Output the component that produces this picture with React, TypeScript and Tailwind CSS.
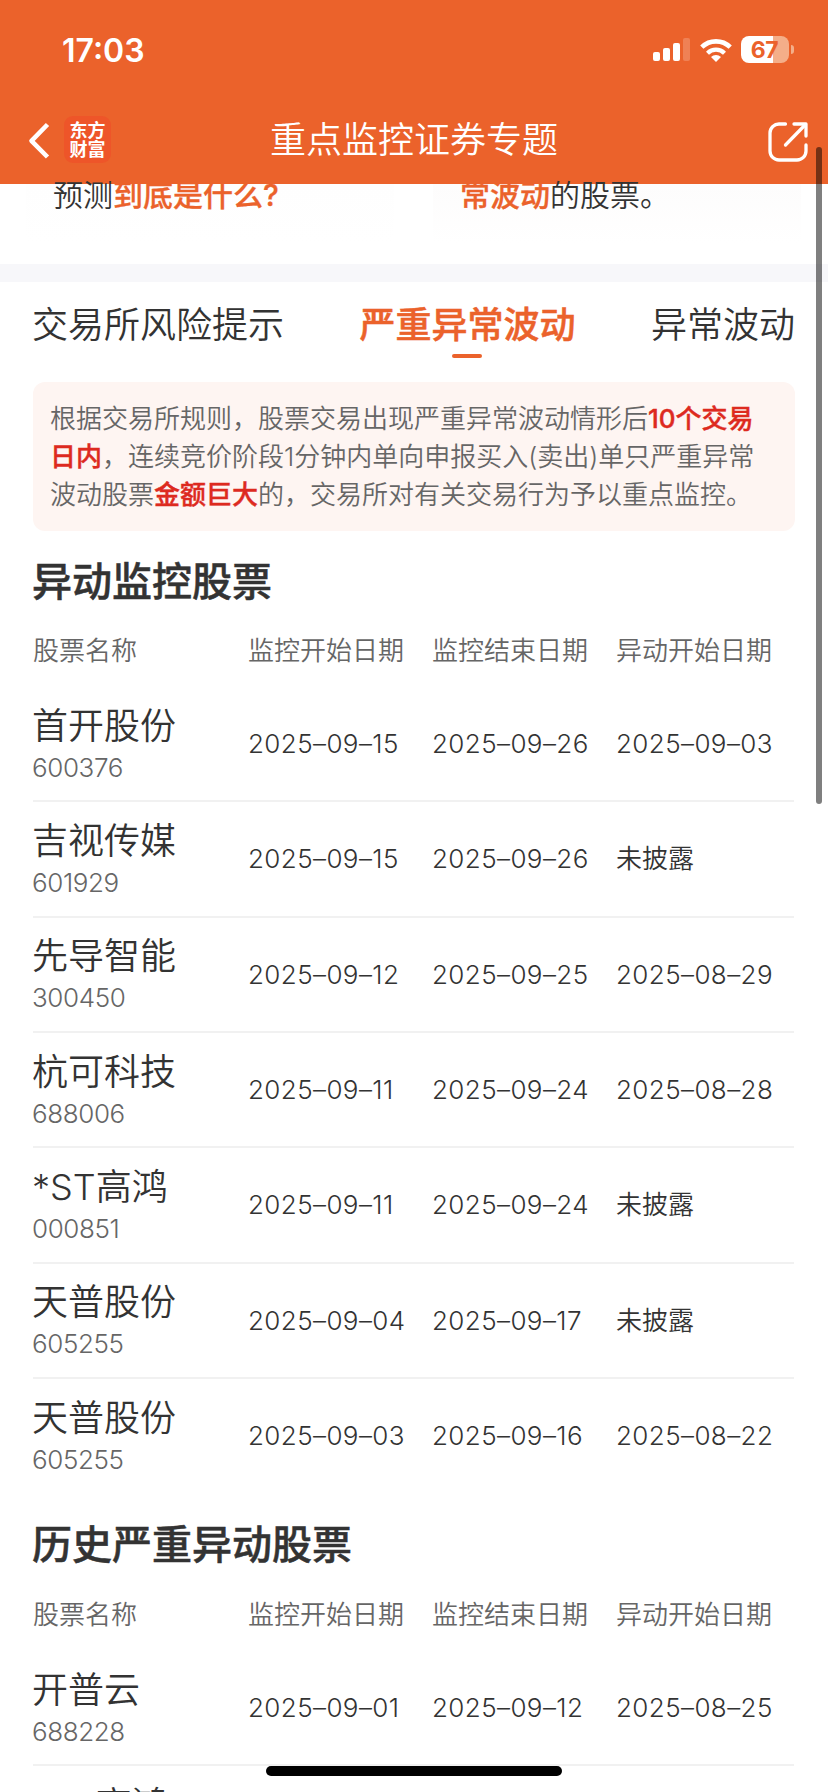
interface Stock {
    name: string;
    code: string;
    start: string;
    end: string;
    abnormal: string;
}

const monitored: Stock[] = [
    { name: '首开股份', code: '600376', start: '2025–09–15', end: '2025–09–26', abnormal: '2025–09–03' },
    { name: '吉视传媒', code: '601929', start: '2025–09–15', end: '2025–09–26', abnormal: '未披露' },
    { name: '先导智能', code: '300450', start: '2025–09–12', end: '2025–09–25', abnormal: '2025–08–29' },
    { name: '杭可科技', code: '688006', start: '2025–09–11', end: '2025–09–24', abnormal: '2025–08–28' },
    { name: '*ST高鸿', code: '000851', start: '2025–09–11', end: '2025–09–24', abnormal: '未披露' },
    { name: '天普股份', code: '605255', start: '2025–09–04', end: '2025–09–17', abnormal: '未披露' },
    { name: '天普股份', code: '605255', start: '2025–09–03', end: '2025–09–16', abnormal: '2025–08–22' },
];

const history: Stock[] = [
    { name: '开普云', code: '688228', start: '2025–09–01', end: '2025–09–12', abnormal: '2025–08–25' },
    { name: '*ST高鸿', code: '', start: '', end: '', abnormal: '' },
];

function StatusBar() {
    return (
        <div className="flex h-[98px] items-center justify-between pr-[34px] pl-[62px]">
            <span className="pt-[3px] text-[32px] leading-none font-semibold">17:03</span>
            <div className="flex items-center pt-px">
                <svg className="h-[23px] w-[37px]" viewBox="0 0 37 23" fill="currentColor">
                    <rect x="0" y="14" width="7" height="9" rx="2" />
                    <rect x="10" y="10" width="7" height="13" rx="2" />
                    <rect x="20" y="5" width="7" height="18" rx="2" />
                    <rect x="30" y="0" width="7" height="23" rx="2" opacity="0.2" />
                </svg>
                <svg className="ml-[10px] h-[24px] w-[32px]" viewBox="0 0 32 24" fill="none" stroke="currentColor" strokeWidth="4.6">
                    <path d="M1.8 9.2a20.2 20.2 0 0 1 28.4 0" />
                    <path d="M7.5 15.2a12 12 0 0 1 17 0" strokeWidth="4.2" />
                    <path d="M16 24l-5-5a7.2 7.2 0 0 1 10 0z" fill="currentColor" stroke="none" />
                </svg>
                <div className="ml-[9px] flex h-[27px] w-[48px] items-center justify-center rounded-[8px] bg-[linear-gradient(90deg,#fff_67%,#f4ae89_67%)] pr-px text-[23px] leading-[27px] font-bold tracking-[-0.5px] text-[#eb622b]">
                    <span className="pt-px">67</span>
                </div>
                <div className="ml-[2px] h-[9px] w-[3px] rounded-r-full bg-[#f4ae89]" />
            </div>
        </div>
    );
}

function Header() {
    return (
        <header className="h-[184px] bg-[#eb622b] text-white">
            <StatusBar />
            <div className="flex h-[86px] items-center justify-between pr-[20px] pl-[28px]">
                <div className="flex w-[122px] items-center">
                    <svg className="h-[38px] w-[22px]" viewBox="0 0 22 38" fill="none" stroke="currentColor" strokeWidth="4.6">
                        <path d="M19.5 2.5L3.5 18.8l16 16.2" strokeLinejoin="round" />
                    </svg>
                    <div className="-mt-[3px] ml-[14px] flex h-[47px] w-[47px] flex-col items-center justify-center rounded-[9px] bg-[#ee5529] text-[18px] leading-[19px] font-bold">
                        <span>东方</span>
                        <span>财富</span>
                    </div>
                </div>
                <h1 className="pb-[3px] text-[36px] leading-none font-[350]">重点监控证券专题</h1>
                <div className="flex w-[130px] justify-end pt-[2px]">
                    <svg className="h-[40px] w-[40px]" viewBox="0 0 40 40" fill="none" stroke="currentColor" strokeWidth="3.3" strokeLinecap="round" strokeLinejoin="round">
                        <path d="M17.5 2H11.5A9 9 0 0 0 2 11V29A9 9 0 0 0 11 38H29A9 9 0 0 0 38 29V23" />
                        <path d="M26 2H38V14" />
                        <path d="M37 3L17.5 23" />
                    </svg>
                </div>
            </div>
        </header>
    );
}

function StockTable({ title, stocks }: { title: string; stocks: Stock[] }) {
    return (
        <section className="-mt-px pr-[34px] pb-[0.67px] pl-[33px]">
            <h2 className="-ml-px flex h-[98px] items-center pt-[5px] text-[40px] leading-none font-medium [-webkit-text-stroke:0.5px_#333]">{title}</h2>
            <div className="grid h-[59px] grid-cols-[215px_184px_184px_1fr] text-[26px] leading-[45px] font-[350] text-[#666]">
                <span>股票名称</span>
                <span>监控开始日期</span>
                <span>监控结束日期</span>
                <span>异动开始日期</span>
            </div>
            {stocks.map((stock, i) => (
                <div key={i} className="grid h-[115.33px] grid-cols-[215px_184px_184px_1fr] items-center border-b-2 border-[#f1f1f1] text-[26px] font-[350] whitespace-nowrap last:border-transparent">
                    <div className="-ml-px pt-[4px]">
                        <div className="h-[44px] text-[36px] leading-[44px]">{stock.name}</div>
                        <div className="h-[40px] text-[26px] leading-[40px] tracking-[-0.4px] text-[#666]">{stock.code}</div>
                    </div>
                    <span className="tracking-[0.4px]">{stock.start}</span>
                    <span className="tracking-[0.4px]">{stock.end}</span>
                    <span className={stock.abnormal.startsWith('2') ? 'tracking-[0.4px]' : ''}>{stock.abnormal}</span>
                </div>
            ))}
        </section>
    );
}

export default function App() {
    return (
        <div className="relative h-[1792px] w-[828px] overflow-hidden bg-white font-['Inter','Noto_Sans_CJK_SC',sans-serif] text-[#333]">
            <Header />

            {/* Tarjetas cortadas por el scroll */}
            <div className="grid h-[80px] grid-cols-[368px_368px] gap-[39px] pl-[26px] text-[30px] leading-[22px] font-[350]">
                <p className="h-[60px] bg-linear-to-b from-[#fefefe] to-white pl-[27px]">
                    预测<b className="font-medium text-[#eb622b] [-webkit-text-stroke:0.3px_#eb622b]">到底是什么?</b>
                </p>
                <p className="h-[60px] bg-linear-to-b from-[#fdfcfc] to-white pl-[27px]">
                    <b className="font-medium text-[#eb622b] [-webkit-text-stroke:0.3px_#eb622b]">常波动</b>的股票。
                </p>
            </div>
            <div className="h-[18px] bg-[#f7f7fa]" />

            {/* Pestañas */}
            <nav className="flex h-[100px] justify-between pt-[19px] pr-[33px] pl-[32px] text-[36px] leading-[48px] font-[350]">
                <span>交易所风险提示</span>
                <div className="flex flex-col items-center font-medium text-[#eb622b]">
                    <span className="[-webkit-text-stroke:0.5px_#eb622b]">严重异常波动</span>
                    <i className="mt-[5px] h-[4px] w-[30px] rounded-full bg-[#eb622b]" />
                </div>
                <span>异常波动</span>
            </nav>

            <div className="mr-[33px] ml-[33px] h-[149px] rounded-[12px] bg-[#fef5f2] pt-[18px] pl-[17px] text-[26px] leading-[38px] font-[350] whitespace-nowrap text-[#666]">
                <p>根据交易所规则，股票交易出现严重异常波动情形后<b className="font-medium text-[#dd2a1f] [-webkit-text-stroke:0.4px_#dd2a1f]">10个交易</b></p>
                <p><b className="font-medium text-[#dd2a1f] [-webkit-text-stroke:0.4px_#dd2a1f]">日内</b>，连续竞价阶段1分钟内单向申报买入(卖出)单只严重异常</p>
                <p>波动股票<b className="font-medium text-[#dd2a1f] [-webkit-text-stroke:0.4px_#dd2a1f]">金额巨大</b>的，交易所对有关交易行为予以重点监控。</p>
            </div>

            <StockTable title="异动监控股票" stocks={monitored} />
            <StockTable title="历史严重异动股票" stocks={history} />

            {/* Barra de scroll e indicador de inicio */}
            <div className="absolute top-[147px] right-[6px] h-[657px] w-[6px] rounded-full bg-black/50" />
            <div className="absolute bottom-[16px] left-[266px] h-[10px] w-[296px] rounded-full bg-black" />
        </div>
    );
}
